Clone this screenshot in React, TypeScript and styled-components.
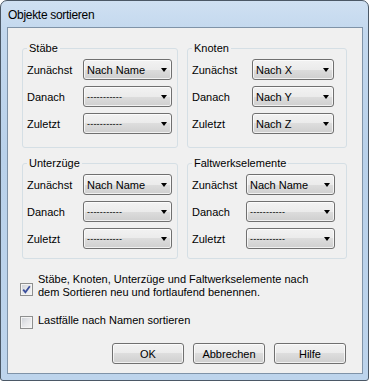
import styled, { createGlobalStyle } from "styled-components";

const GlobalStyle = createGlobalStyle`
  html, body {
    margin: 0;
    padding: 0;
  }
  body {
    font-family: "Liberation Sans", Arial, sans-serif;
    font-size: 11px;
    color: #000;
    background: #fff;
  }
  * {
    box-sizing: border-box;
  }
`;

type Row = { label: string; value: string };

const DASH = "-----------";

const groups: {
  title: string;
  labelWidth: number;
  selectWidth: number;
  padBottom: number;
  rows: Row[];
}[] = [
  {
    title: "Stäbe",
    labelWidth: 56,
    selectWidth: 89,
    padBottom: 13,
    rows: [
      { label: "Zunächst", value: "Nach Name" },
      { label: "Danach", value: DASH },
      { label: "Zuletzt", value: DASH },
    ],
  },
  {
    title: "Knoten",
    labelWidth: 60,
    selectWidth: 82,
    padBottom: 13,
    rows: [
      { label: "Zunächst", value: "Nach X" },
      { label: "Danach", value: "Nach Y" },
      { label: "Zuletzt", value: "Nach Z" },
    ],
  },
  {
    title: "Unterzüge",
    labelWidth: 56,
    selectWidth: 89,
    padBottom: 9,
    rows: [
      { label: "Zunächst", value: "Nach Name" },
      { label: "Danach", value: DASH },
      { label: "Zuletzt", value: DASH },
    ],
  },
  {
    title: "Faltwerkselemente",
    labelWidth: 54,
    selectWidth: 89,
    padBottom: 9,
    rows: [
      { label: "Zunächst", value: "Nach Name" },
      { label: "Danach", value: DASH },
      { label: "Zuletzt", value: DASH },
    ],
  },
];

export default function App() {
  return (
    <>
      <GlobalStyle />
      <Window>
        <TitleBar>Objekte sortieren</TitleBar>
        <Client>
          <GroupGrid>
            {groups.map((g) => (
              <Group key={g.title} $padBottom={g.padBottom}>
                <Legend>{g.title}</Legend>
                {g.rows.map((r) => (
                  <FieldRow
                    key={r.label}
                    $labelWidth={g.labelWidth}
                    $selectWidth={g.selectWidth}
                  >
                    <Label>{r.label}</Label>
                    <Combo>
                      <ComboText $dash={r.value === DASH}>{r.value}</ComboText>
                      <Arrow />
                    </Combo>
                  </FieldRow>
                ))}
              </Group>
            ))}
          </GroupGrid>

          <CheckList>
            <CheckRow $boxTop={10}>
              <CheckBox>
                <svg width="9" height="9" viewBox="0 0 9 9">
                  <path
                    d="M1.2 4.6 L3.4 7.2 L7.8 1.2"
                    fill="none"
                    stroke="#3b4f9c"
                    strokeWidth="1.8"
                  />
                </svg>
              </CheckBox>
              <CheckText>
                Stäbe, Knoten, Unterzüge und Faltwerkselemente nach
                <br />
                dem Sortieren neu und fortlaufend benennen.
              </CheckText>
            </CheckRow>
            <CheckRow $boxTop={2}>
              <CheckBox />
              <CheckText>Lastfälle nach Namen sortieren</CheckText>
            </CheckRow>
          </CheckList>

          <ButtonRow>
            <Button>OK</Button>
            <Button>Abbrechen</Button>
            <Button>Hilfe</Button>
          </ButtonRow>
        </Client>
      </Window>
    </>
  );
}

const Window = styled.div`
  width: 369px;
  height: 381px;
  display: flex;
  flex-direction: column;
  padding: 0 5px 6px 6px;
  border: 1px solid #4b5866;
  border-radius: 7px 7px 3px 3px;
  background: linear-gradient(
    to bottom,
    #cfe0f2 0%,
    #c3d8ee 8%,
    #b9d1ea 40%,
    #bdd4ec 100%
  );
`;

const TitleBar = styled.div`
  height: 26px;
  display: flex;
  align-items: center;
  padding-left: 1px;
  padding-top: 1px;
  font-size: 12px;
  letter-spacing: -0.3px;
  color: #000;
`;

const Client = styled.div`
  flex: 1;
  display: flex;
  flex-direction: column;
  border: 1px solid #7f93a8;
  background: #f0f0f0;
  padding-top: 20px;
`;

const GroupGrid = styled.div`
  display: grid;
  grid-template-columns: 156px 160px;
  column-gap: 9px;
  row-gap: 15px;
  padding: 0 15px 0 14px;
`;

const Group = styled.div<{ $padBottom: number }>`
  position: relative;
  display: flex;
  flex-direction: column;
  gap: 6px;
  border: 1px solid #d5dfe5;
  border-radius: 3px;
  padding: 10px 0 ${(p) => p.$padBottom}px 4px;
`;

const Legend = styled.span`
  position: absolute;
  top: -8px;
  left: 4px;
  padding: 0 2px;
  line-height: 14px;
  background: #f0f0f0;
  color: #000;
`;

const FieldRow = styled.div<{ $labelWidth: number; $selectWidth: number }>`
  display: grid;
  grid-template-columns: ${(p) => p.$labelWidth}px ${(p) => p.$selectWidth}px;
  align-items: center;
  height: 21px;
`;

const Label = styled.span`
  white-space: nowrap;
`;

const Combo = styled.div`
  height: 21px;
  display: flex;
  align-items: center;
  justify-content: space-between;
  padding: 0 4px 0 3px;
  border: 1px solid #707070;
  border-radius: 3px;
  background: linear-gradient(
    to bottom,
    #f2f2f2 0%,
    #ebebeb 50%,
    #dddddd 50%,
    #cfcfcf 100%
  );
  box-shadow: inset 0 0 0 1px rgba(255, 255, 255, 0.7);
`;

const ComboText = styled.span<{ $dash: boolean }>`
  white-space: nowrap;
  font-size: ${(p) => (p.$dash ? "9px" : "11px")};
  letter-spacing: ${(p) => (p.$dash ? "0.2px" : "0")};
`;

const Arrow = styled.span`
  width: 0;
  height: 0;
  border-left: 3.5px solid transparent;
  border-right: 3.5px solid transparent;
  border-top: 4px solid #000;
  margin-top: 1px;
`;

const CheckList = styled.div`
  display: flex;
  flex-direction: column;
  gap: 15px;
  margin-top: 14px;
  padding-left: 12px;
`;

const CheckRow = styled.div<{ $boxTop: number }>`
  display: flex;
  align-items: flex-start;
  gap: 5px;
  line-height: 13px;
  & > span:first-child {
    margin-top: ${(p) => p.$boxTop}px;
  }
`;

const CheckBox = styled.span`
  flex: none;
  width: 13px;
  height: 13px;
  display: flex;
  align-items: center;
  justify-content: center;
  border: 1px solid #8e8f8f;
  background: linear-gradient(135deg, #cbcfd5 0%, #e6e7ea 50%, #f6f6f6 100%);
  box-shadow: inset 0 0 0 1px #f4f4f4;
`;

const CheckText = styled.span`
  white-space: nowrap;
`;

const ButtonRow = styled.div`
  display: flex;
  justify-content: flex-end;
  gap: 9px;
  margin-top: 14px;
  padding-right: 16px;
`;

const Button = styled.button`
  width: 72px;
  height: 21px;
  padding: 0;
  font-family: "Liberation Sans", Arial, sans-serif;
  font-size: 11px;
  color: #000;
  border: 1px solid #707070;
  border-radius: 3px;
  background: linear-gradient(
    to bottom,
    #f2f2f2 0%,
    #ebebeb 50%,
    #dddddd 50%,
    #cfcfcf 100%
  );
  box-shadow: inset 0 0 0 1px rgba(255, 255, 255, 0.7);
`;
